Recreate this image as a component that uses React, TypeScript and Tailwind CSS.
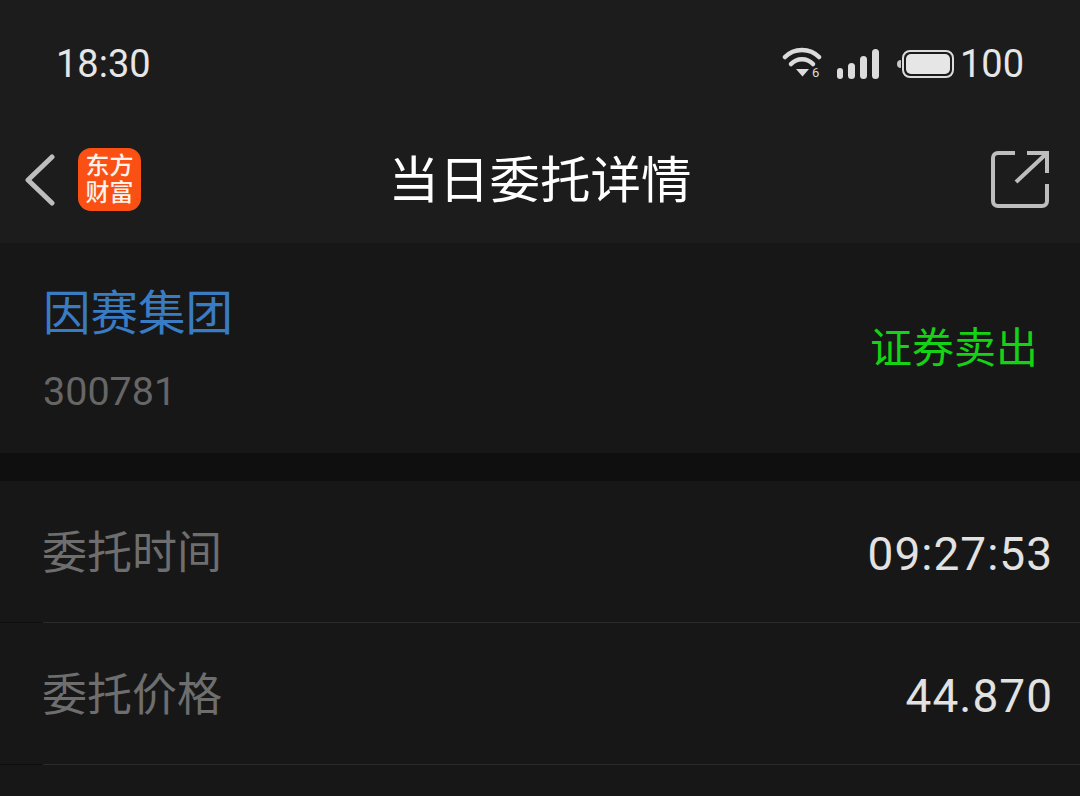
const cjk = 'font-["Roboto","Noto_Sans_CJK_SC",sans-serif]'

function WifiIcon() {
  return (
    <svg width="40" height="36" viewBox="0 0 40 36" fill="none" className="text-[#dcdcdc]">
      <path d="M3 11C12 1.5 28 1.5 37 11" stroke="currentColor" strokeWidth="4.5" strokeLinecap="round" />
      <path d="M9 18C15 11.5 25 11.5 31 18" stroke="currentColor" strokeWidth="4.5" strokeLinecap="round" />
      <path d="M14 23H27L20.5 30.5Z" fill="currentColor" />
      <text x="30" y="31" fontSize="13" fill="currentColor" fontFamily="Roboto">6</text>
    </svg>
  )
}

function SignalIcon() {
  return (
    <div className="flex items-end gap-[5px] h-[30px]">
      <div className="w-[6px] h-[11px] rounded-full bg-[#dcdcdc]" />
      <div className="w-[7px] h-[16px] rounded-full bg-[#dcdcdc]" />
      <div className="w-[7px] h-[23px] rounded-full bg-[#dcdcdc]" />
      <div className="w-[7px] h-[30px] rounded-full bg-[#dcdcdc]" />
    </div>
  )
}

function BatteryIcon() {
  return (
    <div className="flex items-center">
      <div className="w-[4px] h-[8px] rounded-l-full bg-[#c8c8c8]" />
      <div className="ml-[1px] w-[52px] h-[28px] rounded-[8px] border-2 border-[#dcdcdc] p-[2px]">
        <div className="w-full h-full rounded-[5px] bg-[#e6e6e6]" />
      </div>
    </div>
  )
}

function Row({ label, value }: { label: string; value: string }) {
  return (
    <div className="h-[142px] flex flex-col">
      <div className="flex-1 flex items-center justify-between pl-[42px] pr-[27px] pt-[5px]">
        <span className="text-[45px] text-[#6e6e6e]">{label}</span>
        <span className="text-[46px] tracking-[1px] text-[#e2e2e2]">{value}</span>
      </div>
      <div className="h-px flex bg-[#0f0f0f]">
        <div className="w-[43px]" />
        <div className="flex-1 bg-[#2a2a2a]" />
      </div>
    </div>
  )
}

export default function App() {
  return (
    <div className={`w-[1080px] h-[796px] overflow-hidden bg-[#171717] ${cjk}`}>
      <div className="h-[243px] bg-[#1c1c1c] flex flex-col">
        {/* Status bar */}
        <div className="h-[128px] flex items-start justify-between pl-[56px] pr-[56px] pt-[40px]">
          <span className="text-[38px] leading-[48px] text-[#e6e6e6]">18:30</span>
          <div className="flex items-center gap-[15px] h-[48px]">
            <WifiIcon />
            <SignalIcon />
            <div className="flex items-center gap-[6px] ml-[3px]">
              <BatteryIcon />
              <span className="text-[38px] leading-[48px] text-[#e6e6e6]">100</span>
            </div>
          </div>
        </div>

        {/* Nav bar */}
        <div className="relative flex-1 flex items-start justify-between pl-[24px] pr-[31px] pt-[20px]">
          <div className="flex items-center gap-[22px]">
            <svg width="32" height="52" viewBox="0 0 32 52" fill="none">
              <path d="M28 3L4 26L28 49" stroke="#bdbdbd" strokeWidth="5" strokeLinecap="round" strokeLinejoin="round" />
            </svg>
            <div className="w-[63px] h-[63px] rounded-[13px] bg-[#fa5014] flex flex-col items-center justify-center pb-[5px] text-[#fff3ec] text-[24px] leading-[27px] font-medium font-['Noto_Sans_CJK_SC',serif]">
              <span>东方</span>
              <span>财富</span>
            </div>
          </div>
          <h1 className="absolute left-0 right-0 top-[21px] text-center text-[50.5px] leading-[64px] text-white">当日委托详情</h1>
          <svg width="58" height="58" viewBox="0 0 58 58" fill="none" className="mt-[3px]">
            <path d="M24 2H7C4 2 2 4 2 7V50C2 53 4 55 7 55H51C54 55 56 53 56 50V33" stroke="#bdbdbd" strokeWidth="4" />
            <path d="M36 2H56V22" stroke="#bdbdbd" strokeWidth="4" />
            <path d="M55 3L25 31" stroke="#bdbdbd" strokeWidth="4" />
          </svg>
        </div>
      </div>

      {/* Stock */}
      <div className="h-[210px] flex items-center justify-between pl-[43px] pr-[42px]">
        <div className="flex flex-col">
          <span className="text-[47.5px] leading-[60px] text-[#3a7cc4]">因赛集团</span>
          <span className="mt-[24px] -mb-[4px] text-[39.5px] leading-[48px] text-[#666666]">300781</span>
        </div>
        <span className="pt-[1px] text-[42px] text-[#14d214]">证券卖出</span>
      </div>

      <div className="h-[28px] bg-[#0f0f0f]" />

      <Row label="委托时间" value="09:27:53" />
      <Row label="委托价格" value="44.870" />
    </div>
  )
}
